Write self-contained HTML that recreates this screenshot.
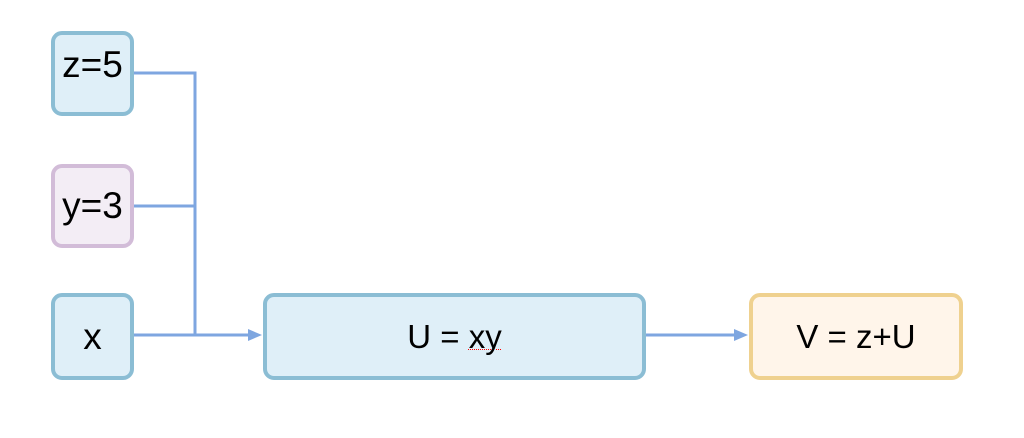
<!DOCTYPE html><html><head><style>
body{margin:0;width:1024px;height:438px;background:#fff;position:relative;font-family:"Liberation Sans",sans-serif;overflow:hidden}
.b{position:absolute;box-sizing:border-box;border:4px solid #8bbdd4;background:#dfeff8;border-radius:11px;display:flex;align-items:center;justify-content:center;font-size:33px;color:#000}
.s{font-size:37px}
</style></head><body>
<svg width="1024" height="438" style="position:absolute;left:0;top:0">
<g stroke="#7ea6e0" stroke-width="3" fill="none">
<polyline points="133,73 195,73 195,335"/>
<line x1="133" y1="206" x2="195" y2="206"/>
<line x1="133" y1="335" x2="250" y2="335"/>
<line x1="645" y1="335" x2="736" y2="335"/>
</g>
<polygon points="248,329 262,335 248,341" fill="#7ea6e0"/>
<polygon points="734,329 748,335 734,341" fill="#7ea6e0"/>
</svg>
<div class="b s" style="left:51px;top:31px;width:83px;height:85px;align-items:flex-start;padding-top:9px">z=5</div>
<div class="b s" style="left:51px;top:164px;width:83px;height:84px;border-color:#d2bcd8;background:#f3edf5">y=3</div>
<div class="b s" style="left:51px;top:293px;width:83px;height:87px">x</div>
<div class="b" style="left:263px;top:293px;width:383px;height:87px"><span>U = <span style="text-decoration:underline dotted red;text-decoration-thickness:1px">xy</span></span></div>
<div class="b" style="left:749px;top:293px;width:214px;height:87px;border-color:#efd18f;background:#fff5ea">V = z+U</div>
</body></html>
